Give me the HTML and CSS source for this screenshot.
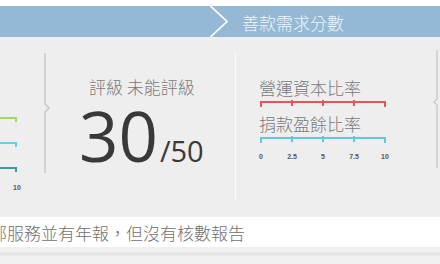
FILE: index.html
```html
<!DOCTYPE html>
<html lang="zh-Hant">
<head>
<meta charset="utf-8">
<link rel="stylesheet" href="styles.css">
</head>
<body>
<div class="top"></div>
<header class="bar">
  <svg class="chev" viewBox="0 0 18 31"><path d="M0.5 0 L17 15.5 L0.5 31" fill="none" stroke="#ffffff" stroke-width="1.6"/></svg>
  <span class="title">善款需求分數</span>
</header>
<main class="panels">
  <section class="p-left">
    <div class="mini green"></div>
    <div class="mini cyan"></div>
    <div class="mini teal"></div>
    <div class="mini-lbl">10</div>
  </section>
  <svg class="divider" viewBox="0 0 10 120"><path d="M1 0 V51 L5 55 L1 59 V120" fill="none" stroke="#c4cad1" stroke-width="1.5"/></svg>
  <section class="p-center">
    <div class="label">評級 未能評級</div>
    <div class="score"><span class="big">30</span><span class="small">/50</span></div>
  </section>
  <div class="sep"></div>
  <section class="p-right">
    <div class="label">營運資本比率</div>
    <svg class="scale" viewBox="0 0 127 7"><g fill="none" stroke="#e0585c" stroke-width="2"><path d="M0 2 H126"/><path d="M1 1 V7 M32 0 V6 M63 0 V6 M94 0 V6 M125 1 V7"/></g></svg>
    <div class="label l2">捐款盈餘比率</div>
    <svg class="scale" viewBox="0 0 127 7"><g fill="none" stroke="#5ccbd8" stroke-width="2"><path d="M0 2 H126"/><path d="M1 1 V7 M32 0 V6 M63 0 V6 M94 0 V6 M125 1 V7"/></g></svg>
    <div class="axis"><span>0</span><span>2.5</span><span>5</span><span>7.5</span><span>10</span></div>
  </section>
  <svg class="divider-r" viewBox="0 0 6 118"><path d="M4 0 V49 L1 52 L4 55 V118" fill="none" stroke="#c8ccd1" stroke-width="1.5"/></svg>
</main>
<div class="note">部服務並有年報，但沒有核數報告</div>
<div class="foot"><div class="shade"></div></div>
</body>
</html>
```
FILE: styles.css
```css
html, body {
  margin: 0;
  padding: 0;
}
body {
  width: 440px;
  height: 264px;
  overflow: hidden;
  background: #f0f0f0;
  font-family: "Noto Sans CJK TC", "Noto Sans", sans-serif;
  font-weight: 300;
}
.top {
  height: 6px;
  background: #ffffff;
}
.bar {
  height: 31px;
  background: #95b9d5;
  display: flex;
  align-items: center;
  padding-left: 210px;
}
.chev {
  width: 18px;
  height: 31px;
  display: block;
}
.title {
  margin-left: 14px;
  color: #eef4f9;
  font-size: 17px;
  line-height: 20px;
  margin-top: 2px;
}
.panels {
  display: flex;
  align-items: flex-start;
  height: 180px;
  background: #eeeeee;
}
.p-left {
  width: 44px;
  padding-top: 80px;
  display: flex;
  flex-direction: column;
}
.mini {
  width: 17px;
  height: 5px;
  box-sizing: border-box;
  border-top: 2px solid;
  border-right: 2px solid;
}
.mini + .mini {
  margin-top: 20px;
}
.green { border-color: #a6d569; }
.cyan { border-color: #62d2df; }
.teal { border-color: #3e999b; }
.mini-lbl {
  width: 34px;
  margin-top: 12px;
  text-align: center;
  font: bold 7px/8px "Liberation Sans", sans-serif;
  color: #555555;
}
.divider {
  width: 10px;
  height: 120px;
  margin-top: 16px;
  display: block;
}
.p-center {
  width: 181px;
  box-sizing: border-box;
  padding: 40px 0 0 35px;
}
.label {
  font-size: 17px;
  line-height: 20px;
  color: #7a7a7a;
  white-space: nowrap;
}
.score {
  display: flex;
  align-items: baseline;
  margin-left: -10px;
  margin-top: 13px;
  font-family: "Open Sans", sans-serif;
  font-weight: 400;
  color: #393939;
}
.big {
  font-size: 69px;
  line-height: 50px;
}
.small {
  font-size: 29px;
  line-height: 28px;
  margin-left: 2px;
}
.sep {
  width: 1px;
  height: 148px;
  margin-top: 15px;
  background: #fbfbfb;
}
.p-right {
  width: 197px;
  box-sizing: border-box;
  padding: 41px 0 0 23px;
}
.scale {
  display: block;
  width: 127px;
  height: 7px;
  margin: 2px 0 0 1px;
}
.l2 {
  margin-top: 7px;
}
.axis {
  display: flex;
  gap: 11px;
  margin: 10px 0 0 -8px;
}
.axis span {
  width: 20px;
  text-align: center;
  font: bold 7px/8px "Liberation Sans", sans-serif;
  color: #555555;
}
.divider-r {
  width: 6px;
  height: 118px;
  margin-top: 13px;
  display: block;
}
.note {
  height: 30px;
  background: #ffffff;
  color: #707070;
  font-size: 17px;
  line-height: 31px;
  text-indent: -10px;
  white-space: nowrap;
  overflow: hidden;
}
.foot {
  height: 17px;
  padding-top: 5px;
  box-sizing: border-box;
}
.shade {
  height: 4px;
  background: linear-gradient(#e9e9e9, #e3e3e3 50%, #ececec);
}
```
